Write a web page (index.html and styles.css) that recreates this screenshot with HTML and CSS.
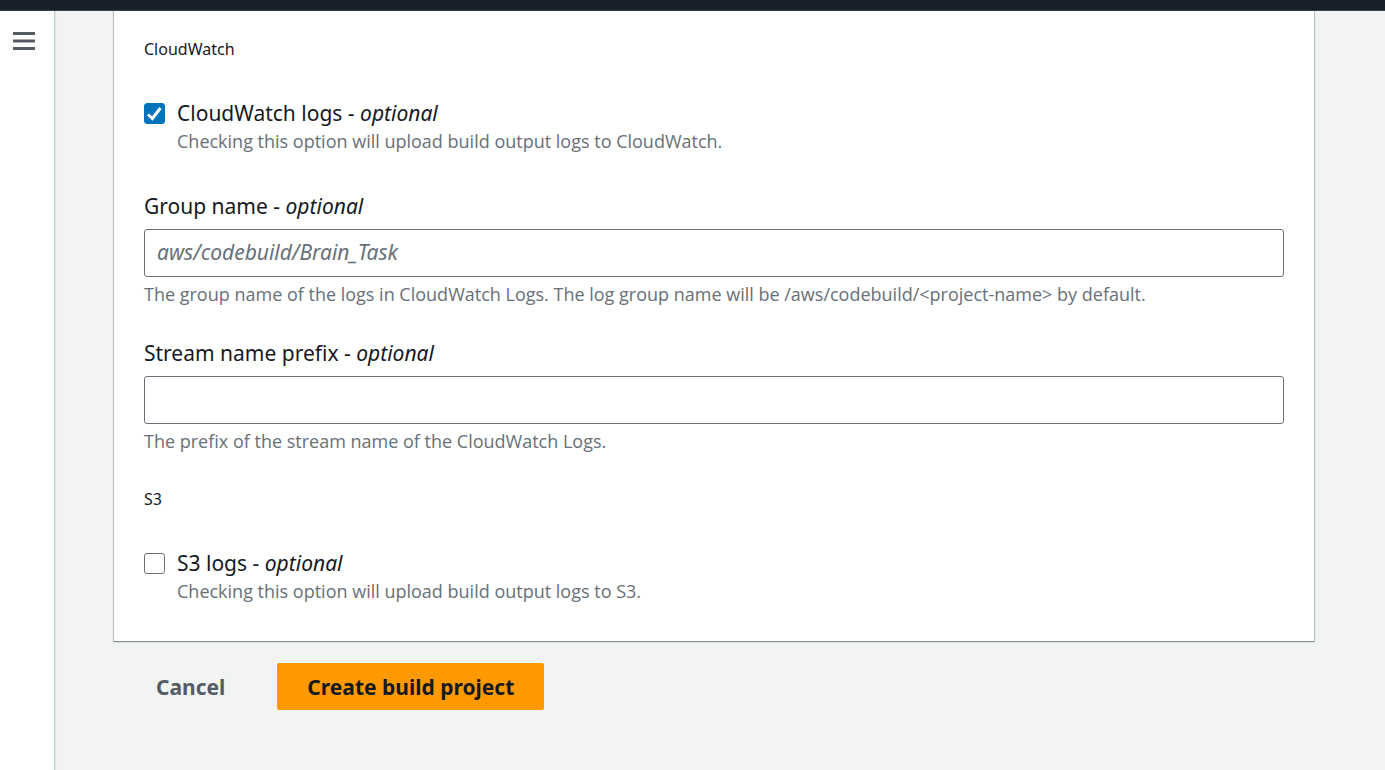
FILE: index.html
```html
<!DOCTYPE html>
<html lang="en">
<head>
<meta charset="utf-8">
<title>Create build project</title>
<link rel="stylesheet" href="styles.css">
</head>
<body>
<header class="topbar"></header>
<div class="layout">
  <nav class="rail" aria-label="Navigation">
    <button class="menu-button" type="button" aria-label="Open navigation">
      <svg width="22" height="20" viewBox="0 0 22 20" aria-hidden="true"><path d="M0 2.5h22M0 10h22M0 17.5h22" stroke="#545b64" stroke-width="3"/></svg>
    </button>
  </nav>
  <main class="content">
    <form class="form">
      <div class="card">
        <h2 class="section-title">CloudWatch</h2>
        <div class="check-row">
          <input class="checkbox" type="checkbox" id="cw-logs" aria-describedby="cw-hint" checked>
          <div class="check-text">
            <label class="label" for="cw-logs">CloudWatch logs - <em>optional</em></label>
            <p class="hint" id="cw-hint">Checking this option will upload build output logs to CloudWatch.</p>
          </div>
        </div>
        <div class="field">
          <label class="label" for="group-name">Group name - <em>optional</em></label>
          <input class="text-input" type="text" id="group-name" placeholder="aws/codebuild/Brain_Task" aria-describedby="group-hint">
          <p class="hint" id="group-hint">The group name of the logs in CloudWatch Logs. The log group name will be /aws/codebuild/&lt;project-name&gt; by default.</p>
        </div>
        <div class="field">
          <label class="label" for="stream-prefix">Stream name prefix - <em>optional</em></label>
          <input class="text-input" type="text" id="stream-prefix" aria-describedby="stream-hint">
          <p class="hint" id="stream-hint">The prefix of the stream name of the CloudWatch Logs.</p>
        </div>
        <h2 class="section-title">S3</h2>
        <div class="check-row">
          <input class="checkbox" type="checkbox" id="s3-logs" aria-describedby="s3-hint">
          <div class="check-text">
            <label class="label" for="s3-logs">S3 logs - <em>optional</em></label>
            <p class="hint" id="s3-hint">Checking this option will upload build output logs to S3.</p>
          </div>
        </div>
      </div>
      <div class="actions">
        <button class="button button-link" type="button">Cancel</button>
        <button class="button button-primary" type="button">Create build project</button>
      </div>
    </form>
  </main>
</div>
</body>
</html>
```
FILE: styles.css
```css
* {
  box-sizing: border-box;
}

body {
  display: flex;
  flex-direction: column;
  min-height: 100vh;
  margin: 0;
  background: #f2f3f3;
  color: #16191f;
  font-family: "Noto Sans", "Open Sans", sans-serif;
  font-size: 21px;
}

.topbar {
  position: relative;
  z-index: 1;
  height: 11px;
  background: #18202b;
  border-bottom: 1px solid #3d3c49;
}

.layout {
  display: flex;
  flex: 1;
}

.rail {
  width: 55px;
  padding: 20px 12px;
  background: #fff;
  border-right: 1px solid #c0cbcc;
  box-shadow: 1px 0 1px #e2e7e7;
}

.menu-button {
  display: block;
  padding: 0 1px;
  border: 0;
  background: none;
}

.menu-button svg {
  display: block;
}

.content {
  flex: 1;
  min-width: 0;
  padding: 0 71px 0 59px;
}

.card {
  display: flex;
  flex-direction: column;
  gap: 30px;
  padding: 24px 30px 30px;
  background: #fff;
  box-shadow: 0 1px 1px #879596, 0 0 1px 1px #c0cbcc;
}

.section-title {
  margin: 2px 0 7px;
  font-size: 16px;
  font-weight: 400;
  line-height: 24px;
}

.check-row {
  display: flex;
  gap: 12px;
  margin-bottom: 6px;
}

.checkbox {
  appearance: none;
  flex: none;
  width: 21px;
  height: 21px;
  margin: 5px 0 0;
  border: 1px solid #687078;
  border-radius: 3px;
  background: #fff;
}

.checkbox:checked {
  border-color: #0073bb;
  background: #0073bb url("data:image/svg+xml,%3Csvg xmlns='http://www.w3.org/2000/svg' viewBox='0 0 21 21'%3E%3Cpath d='M4 11.5l4.4 4L16.5 5' fill='none' stroke='white' stroke-width='3'/%3E%3C/svg%3E") center / 21px 21px no-repeat;
}

.label {
  display: block;
  line-height: 30px;
}

.hint {
  margin: 0;
  color: #687078;
  font-family: "Open Sans", "Noto Sans", sans-serif;
  font-size: 18px;
  line-height: 27px;
}

.text-input {
  display: block;
  width: 100%;
  height: 48px;
  margin: 8px 0 4px;
  padding: 0 12px 2px;
  border: 1px solid #687078;
  border-radius: 3px;
  background: #fff;
  color: inherit;
  font: inherit;
}

.text-input::placeholder {
  color: #687078;
  font-style: italic;
  opacity: 1;
}

.actions {
  display: flex;
  gap: 22px;
  padding: 22px 12px;
}

.button {
  min-height: 47px;
  padding: 0 30px;
  border: 0;
  border-radius: 2px;
  font: inherit;
  font-weight: 700;
}

.button-link {
  background: none;
  color: #545b64;
}

.button-primary {
  background: #ff9900;
  color: #16191f;
}
```
